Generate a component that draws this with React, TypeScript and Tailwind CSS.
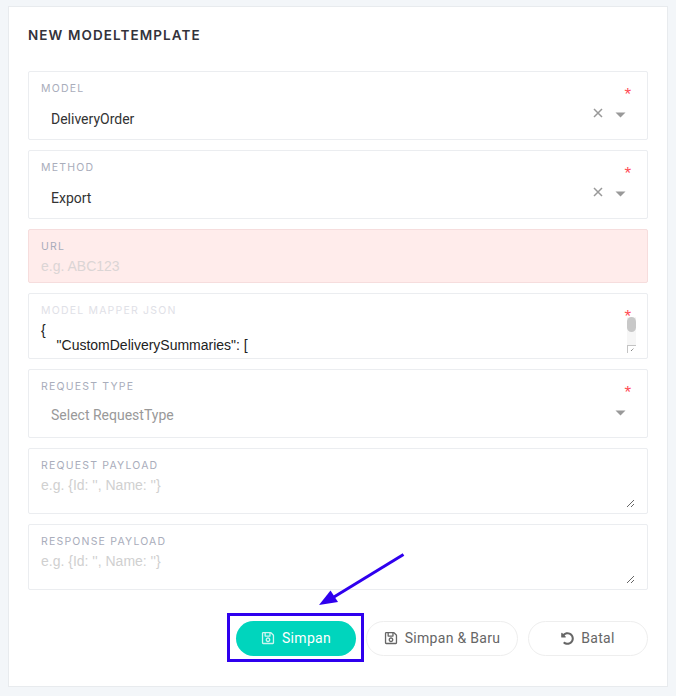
import React from 'react';
import { FaRegSave, FaUndoAlt } from 'react-icons/fa';

const labelClass = "block font-['Inter',sans-serif] text-[10.5px] leading-[14px] uppercase tracking-[1.2px]";

const Star = () => (
  <span className="absolute right-[16px] top-[14px] font-['Liberation_Sans',sans-serif] text-[17px] leading-[17px] text-[#ff4d55]">*</span>
);

const SelectControls = ({ clearable }: { clearable: boolean }) => (
  <div className="absolute right-[21px] top-[36px] flex items-start gap-[12px]">
    {clearable && (
      <svg width="10" height="10" viewBox="0 0 10 10" className="text-[#999999]">
        <path d="M1 1l8 8M9 1l-8 8" stroke="currentColor" strokeWidth="1.5" fill="none" />
      </svg>
    )}
    <svg width="11" height="6" viewBox="0 0 11 6" className="mt-[4px] text-[#999999]">
      <path d="M0.5 0.5h10L5.5 5.5z" fill="currentColor" />
    </svg>
  </div>
);

const SelectField = ({ label, value, placeholder }: { label: string; value?: string; placeholder?: string }) => (
  <div className="relative h-[69px] rounded-[2px] border border-[#ebedf0] bg-white pl-3 pt-[10px]">
    <label className={`${labelClass} text-[#a9adbb]`}>{label}</label>
    <div className={`pl-[10px] font-['Roboto',sans-serif] text-[14px] leading-[20px] ${value ? 'mt-[13px] text-[#333333]' : 'mt-[11px] text-[#999999]'}`}>
      {value ?? placeholder}
    </div>
    <Star />
    <SelectControls clearable={!!value} />
  </div>
);

const TextareaField = ({ label, placeholder }: { label: string; placeholder: string }) => (
  <div className="h-[66px] rounded-[2px] border border-[#ebedf0] bg-white pl-3 pr-[12px] pt-[10px]">
    <label className={`${labelClass} text-[#a9adbb]`}>{label}</label>
    <textarea
      placeholder={placeholder}
      className="mt-[4px] block h-[31px] w-full resize-y bg-transparent font-['Liberation_Sans',sans-serif] text-[14px] leading-[17px] text-[#333333] outline-none placeholder:text-[#d0d0d0]"
    />
  </div>
);

export default function App() {
  return (
    <div className="h-[696px] w-[676px] overflow-hidden bg-[#f3f6f9] pl-2 pr-2 pt-[6px]">
      <div className="relative h-[681px] border border-[#e8ebee] bg-white px-[19px] pt-[19px]">
        <h1 className="font-['Inter',sans-serif] text-[13.5px] font-semibold uppercase leading-[18px] tracking-[1.08px] text-[#33333b]">
          New ModelTemplate
        </h1>

        <div className="mt-[27px] flex flex-col gap-[10px]">
          <SelectField label="Model" value="DeliveryOrder" />
          <SelectField label="Method" value="Export" />

          <div className="h-[54px] rounded-[2px] border border-[#f6dddd] bg-[#ffeceb] pl-3 pt-[10px]">
            <label className={`${labelClass} text-[#a9adbb]`}>URL</label>
            <input
              placeholder="e.g. ABC123"
              className="mt-[4px] block w-full bg-transparent font-['Liberation_Sans',sans-serif] text-[14px] leading-[17px] outline-none placeholder:text-[#dbd5d5]"
            />
          </div>

          <div className="relative h-[66px] rounded-[2px] border border-[#ebedf0] bg-white pl-3 pt-[10px]">
            <label className={`${labelClass} text-[#dfe1e7]`}>Model Mapper JSON</label>
            <div className="mt-[5px] whitespace-pre font-['Liberation_Sans',sans-serif] text-[14px] leading-[15px] text-[#222222]">
              {'{\n    "CustomDeliverySummaries": ['}
            </div>
            <Star />
            {/* fake scrollbar + resize corner */}
            <div className="absolute right-[11px] top-[23px] flex h-[36px] w-[9px] flex-col justify-between bg-[#f6f6f6]">
              <div className="h-[15px] rounded-full bg-[#c8c8c8]" />
              <div className="h-[8px] border-l border-t border-[#c4c4c4] bg-white">
                <svg width="8" height="7" viewBox="0 0 8 7" className="text-[#555555]">
                  <path d="M3 5l3-3" stroke="currentColor" strokeWidth="1" strokeDasharray="1 1" />
                </svg>
              </div>
            </div>
          </div>

          <SelectField label="Request Type" placeholder="Select RequestType" />
          <TextareaField label="Request Payload" placeholder="e.g. {Id: '', Name: ''}" />
          <TextareaField label="Response Payload" placeholder="e.g. {Id: '', Name: ''}" />
        </div>

        <div className="mt-[31px] flex justify-end gap-[10px] font-['Roboto',sans-serif] text-[14px] tracking-[0.3px]">
          <div className="relative">
            <button className="flex h-[35px] w-[120px] items-center justify-center gap-[7px] rounded-full bg-[#00d5bd] text-white">
              <FaRegSave size={14} className="-mt-[1px] opacity-80" />
              <span>Simpan</span>
            </button>
            {/* annotation box */}
            <div className="absolute -bottom-[6px] -left-[9px] -right-[8px] -top-[8px] border-[3px] border-[#2f00ee]" />
          </div>
          <button className="flex h-[35px] w-[152px] items-center justify-center gap-[7px] rounded-full border border-[#eeeeee] bg-white text-[#666666]">
            <FaRegSave size={14} className="-mt-[1px]" />
            <span>Simpan &amp; Baru</span>
          </button>
          <button className="flex h-[35px] w-[120px] items-center justify-center gap-[7px] rounded-full border border-[#eeeeee] bg-white text-[#666666]">
            <FaUndoAlt size={13} />
            <span>Batal</span>
          </button>
        </div>

        {/* annotation arrow */}
        <svg width="100" height="64" viewBox="0 0 100 64" className="absolute left-[300px] top-[546px] text-[#2f00ee]">
          <path d="M94.5 1.5L20 47" stroke="currentColor" strokeWidth="3" fill="none" />
          <path d="M10 52L21.5 37.5L29 49z" fill="currentColor" />
        </svg>
      </div>
    </div>
  );
}
